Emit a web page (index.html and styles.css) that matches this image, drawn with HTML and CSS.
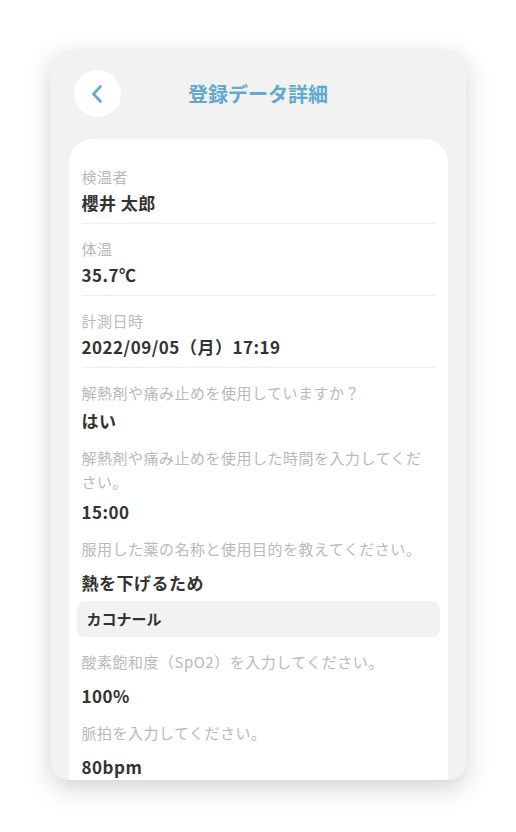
FILE: index.html
```html
<!DOCTYPE html>
<html lang="ja">
<head>
  <meta charset="UTF-8">
  <title>登録データ詳細</title>
  <link rel="stylesheet" href="styles.css">
</head>
<body>
<div class="phone">
  <div class="header">
    <span class="back">
      <svg width="14" height="20" viewBox="0 0 14 20"><path d="M10.5 2.5 L3.5 10 L10.5 17.5" fill="none" stroke="#62a9d0" stroke-width="2.6" stroke-linecap="round" stroke-linejoin="round"/></svg>
    </span>
    <h1 class="title">登録データ詳細</h1>
    <span></span>
  </div>

  <div class="card">
    <!-- 基本情報 -->
    <div class="item">
      <p class="item-label">検温者</p>
      <p class="item-value">櫻井 太郎</p>
    </div>
    <div class="item">
      <p class="item-label">体温</p>
      <p class="item-value">35.7℃</p>
    </div>
    <div class="item">
      <p class="item-label">計測日時</p>
      <p class="item-value">2022/09/05（月）17:19</p>
    </div>

    <!-- 質問と回答 -->
    <div class="q">
      <p class="q-label">解熱剤や痛み止めを使用していますか？</p>
      <p class="q-value choice">はい</p>
    </div>
    <div class="q">
      <p class="q-label">解熱剤や痛み止めを使用した時間を入力してください。</p>
      <p class="q-value time">15:00</p>
    </div>
    <div class="q">
      <p class="q-label">服用した薬の名称と使用目的を教えてください。</p>
      <p class="q-value">熱を下げるため</p>
      <p class="q-note">カコナール</p>
    </div>
    <div class="q">
      <p class="q-label">酸素飽和度（SpO2）を入力してください。</p>
      <p class="q-value">100%</p>
    </div>
    <div class="q">
      <p class="q-label">脈拍を入力してください。</p>
      <p class="q-value">80bpm</p>
    </div>
  </div>
</div>
</body>
</html>
```

FILE: styles.css
```css
* {
  padding: 0;
  margin: 0;
  box-sizing: border-box;
}

body {
  background: #fff;
  font-family: "Noto Sans CJK JP", "Noto Sans", sans-serif;
}

.phone {
  width: 415px;
  height: 730px;
  margin: 50px auto;
  background: #f2f2f2;
  border-radius: 18px;
  box-shadow: 0 8px 26px rgba(0, 0, 0, 0.18);
  overflow: hidden;
  display: flex;
  flex-direction: column;
}

.header {
  display: grid;
  grid-template-columns: 47px 1fr 47px;
  align-items: center;
  padding: 20px 23px 22px;
}

.back {
  width: 47px;
  height: 47px;
  border-radius: 50%;
  background: #fff;
  display: flex;
  align-items: center;
  justify-content: center;
  cursor: pointer;
}

.back svg {
  display: block;
}

.title {
  text-align: center;
  font-size: 20px;
  font-weight: bold;
  color: #62a9d0;
  line-height: 28px;
}

.card {
  flex: 1;
  margin: 0 18px;
  padding: 13px 13px 0;
  background: #fff;
  border-radius: 24px 24px 0 0;
}

.item {
  padding: 13px 0 8px;
  border-bottom: 1px solid #eeeeee;
}

.item-label,
.q-label {
  font-size: 15px;
  line-height: 24px;
  letter-spacing: 0.5px;
  color: #b9b9b9;
}

.item-value,
.q-value {
  font-size: 17px;
  line-height: 24px;
  letter-spacing: 0.5px;
  font-weight: bold;
  color: #333;
}

.item-value {
  margin-top: 2px;
}

.q {
  margin-top: 13px;
}

.q-value {
  margin-top: 10px;
}

.q-value.choice {
  margin-top: 4px;
}

.q-value.time {
  margin-top: 6px;
}

.q-note {
  margin: 6px -5px 0;
  padding: 0 10px;
  height: 36px;
  line-height: 36px;
  background: #f2f2f2;
  border-radius: 8px;
  font-size: 15px;
  font-weight: bold;
  color: #333;
}
```
